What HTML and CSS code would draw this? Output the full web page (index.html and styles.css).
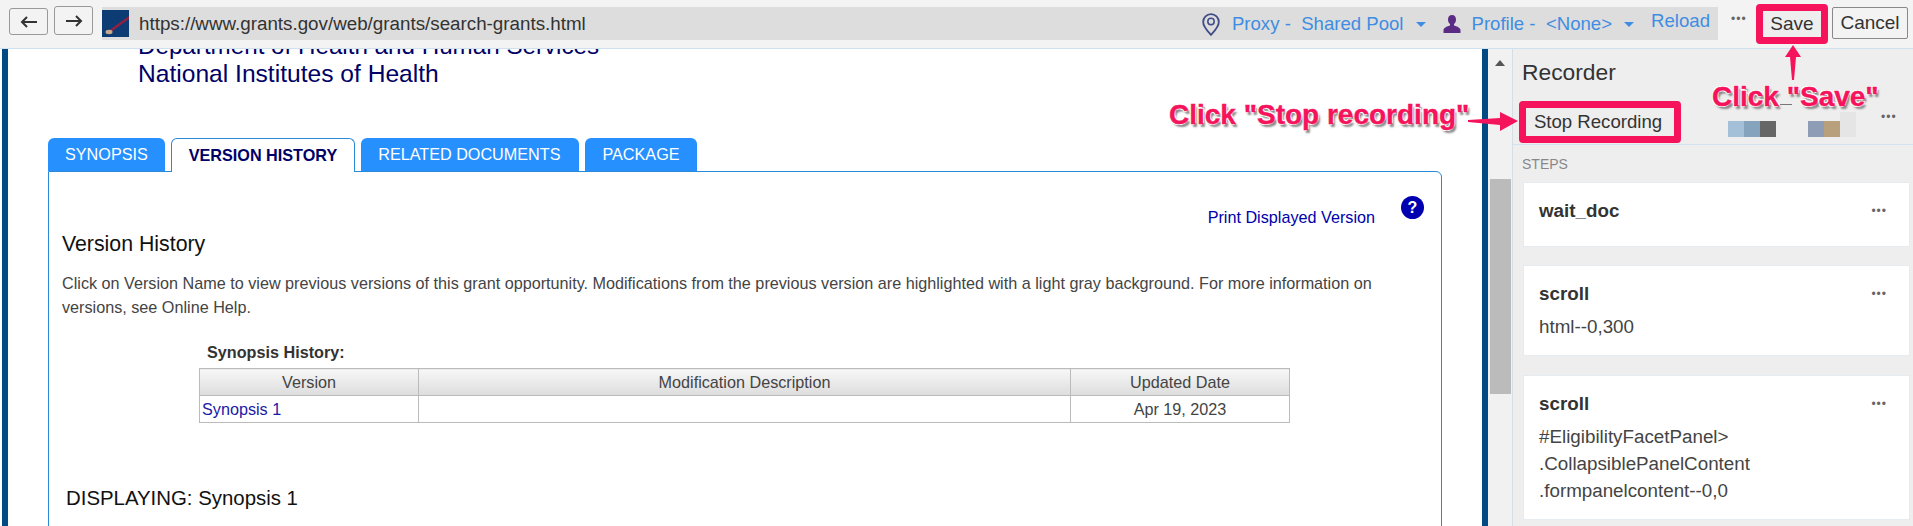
FILE: index.html
```html
<!DOCTYPE html>
<html lang="en">
<head>
    <meta charset="UTF-8">
    <title>Recorder</title>
    <link rel="stylesheet" href="styles.css">
</head>
<body>
    <div class="toolbar">
        <button class="nav-btn back">
            <svg width="18" height="14" viewBox="0 0 18 14"><path d="M17 7H2M7 2L2 7l5 5" fill="none" stroke="#333" stroke-width="2"/></svg>
        </button>
        <button class="nav-btn forward">
            <svg width="18" height="14" viewBox="0 0 18 14"><path d="M1 7h15M11 2l5 5-5 5" fill="none" stroke="#333" stroke-width="2"/></svg>
        </button>
        <div class="url-bar">
            <svg class="favicon" width="27" height="27" viewBox="0 0 27 27">
                <rect width="27" height="27" fill="#0d3b73"/>
                <path d="M6 21L27 6v3L9 22z" fill="#8f2142"/>
                <ellipse cx="7" cy="22" rx="3.5" ry="2.2" fill="#c9a98a"/>
            </svg>
            <span class="url-text">https://www.grants.gov/web/grants/search-grants.html</span>
            <svg class="pin-icon" width="18" height="23" viewBox="0 0 18 23">
                <path d="M9 1.2a7.8 7.8 0 0 0-7.8 7.8C1.200 14 6 18.500 9 21.800 12 18.500 16.800 14 16.800 9A7.800 7.800 0 0 0 9 1.200z" fill="none" stroke="#3f4c86" stroke-width="1.800"/>
                <circle cx="9" cy="8.500" r="3.200" fill="none" stroke="#3f4c86" stroke-width="1.500"/>
            </svg>
            <span class="bar-link proxy">Proxy -&nbsp; Shared Pool</span>
            <span class="caret"></span>
            <svg class="person-icon" width="18" height="18" viewBox="0 0 18 18">
                <path d="M9 0c2.600 0 4 2 4 4.500 0 2-.8 3.600-2 4.600v1.400c2.500.8 6 2 6.500 4.500V18H.5v-3c.5-2.500 4-3.700 6.500-4.500V9.100C5.800 8.100 5 6.500 5 4.500 5 2 6.400 0 9 0z" fill="#5b2c83"/>
            </svg>
            <span class="bar-link profile">Profile -&nbsp; &lt;None&gt;</span>
            <span class="caret"></span>
            <span class="bar-link reload">Reload</span>
        </div>
        <span class="dots top-dots">•••</span>
        <button class="top-btn save">Save</button>
        <button class="top-btn cancel">Cancel</button>
    </div>

    <div class="workspace">
        <div class="page">
            <div class="agency">
                <div class="agency-top">Department of Health and Human Services</div>
                <div>National Institutes of Health</div>
            </div>
            <div class="tabs">
                <div class="tab">SYNOPSIS</div>
                <div class="tab active">VERSION HISTORY</div>
                <div class="tab tab-wide">RELATED DOCUMENTS</div>
                <div class="tab">PACKAGE</div>
            </div>
            <div class="tab-panel">
                <div class="print-row">
                    <a class="print-link">Print Displayed Version</a>
                    <span class="help">?</span>
                </div>
                <h2 class="panel-title">Version History</h2>
                <p class="panel-text">Click on Version Name to view previous versions of this grant opportunity. Modifications from the previous version are highlighted with a light gray background. For more information on versions, see Online Help.</p>
                <div class="history-label">Synopsis History:</div>
                <table class="history">
                    <tr>
                        <th class="col-version">Version</th>
                        <th class="col-desc">Modification Description</th>
                        <th class="col-date">Updated Date</th>
                    </tr>
                    <tr>
                        <td><a>Synopsis 1</a></td>
                        <td></td>
                        <td class="date">Apr 19, 2023</td>
                    </tr>
                </table>
                <div class="displaying">DISPLAYING: Synopsis 1</div>
            </div>
        </div>

        <div class="scrollbar">
            <span class="scroll-up"></span>
            <div class="scroll-thumb"></div>
        </div>

        <div class="recorder">
            <div class="rec-head">
                <h1 class="rec-title">Recorder</h1>
                <div class="rec-actions">
                    <button class="stop-btn">Stop Recording</button>
                    <div class="swatches first">
                        <i class="c1"></i><i class="c2"></i><i class="c3"></i>
                    </div>
                    <div class="swatches second">
                        <i class="c4"></i><i class="c5"></i><i class="c6"></i>
                    </div>
                    <span class="dots rec-dots">•••</span>
                </div>
            </div>
            <div class="steps-label">STEPS</div>
            <div class="step step-short">
                <div class="step-top"><b>wait_doc</b><span class="dots">•••</span></div>
            </div>
            <div class="step">
                <div class="step-top"><b>scroll</b><span class="dots">•••</span></div>
                <div class="step-body">html--0,300</div>
            </div>
            <div class="step">
                <div class="step-top"><b>scroll</b><span class="dots">•••</span></div>
                <div class="step-body">#EligibilityFacetPanel&gt;<br>.CollapsiblePanelContent<br>.formpanelcontent--0,0</div>
            </div>
        </div>
    </div>

    <!-- annotations on top of the screenshot -->
    <div class="note-line"></div>
    <div class="note note-stop">Click "Stop recording"</div>
    <div class="note note-save">Click "Save"</div>
    <svg class="arrows" width="1913" height="526" viewBox="0 0 1913 526">
        <path d="M1468 120l32-2v-6l18 9-18 10v-6l-32-3z" fill="#f5135c"/>
        <path d="M1793 45l8 12h-5l-2 23h-2l-2-23h-5z" fill="#f5135c"/>
    </svg>
</body>
</html>
```

FILE: styles.css
```css
*{
    box-sizing: border-box;
    margin: 0;
    padding: 0;
}
body{
    position: relative;
    height: 526px;
    overflow: hidden;
    background-color: #fff;
    font-family: "Liberation Sans", Arial, sans-serif;
    color: #333;
}
button{
    font-family: inherit;
    color: #333;
}

/* top bar */
.toolbar{
    display: flex;
    align-items: flex-start;
    height: 49px;
    padding-left: 9px;
    background-color: #f3f3f3;
    border-bottom: 1px solid #cfe0ee;
}
.nav-btn{
    display: flex;
    align-items: center;
    justify-content: center;
    width: 39px;
    background-color: #f3f3f3;
    border: 1px solid #999;
    border-radius: 3px;
}
.back{
    height: 27px;
    margin-top: 8px;
}
.forward{
    height: 29px;
    margin: 6px 0 0 6px;
}
.url-bar{
    display: flex;
    align-items: center;
    flex: none;
    width: 1616px;
    height: 33px;
    margin: 7px 0 0 9px;
    background-color: #ddd;
    font-size: 18.8px;
}
.favicon{
    flex: none;
}
.url-text{
    margin-left: 10px;
    color: #333;
}
.pin-icon{
    margin-left: auto;
    margin-top: 2px;
}
.bar-link{
    color: #3f8de2;
    font-size: 18.6px;
}
.proxy{
    margin-left: 12px;
}
.caret{
    width: 0;
    height: 0;
    margin: 2px 0 0 12px;
    border-left: 5px solid transparent;
    border-right: 5px solid transparent;
    border-top: 5px solid #3f8de2;
}
.person-icon{
    margin-left: 17px;
}
.profile{
    margin-left: 11px;
}
.reload{
    margin: -5px 8px 0 17px;
}
.dots{
    color: #666;
    font-size: 12px;
    letter-spacing: 1px;
    line-height: 12px;
}
.top-dots{
    flex: none;
    width: 17px;
    margin: 13px 0 0 13px;
}
.top-btn{
    height: 32px;
    font-size: 19px;
    background-color: #eee;
}
.save{
    width: 72px;
    height: 40px;
    margin: 4px 0 0 8px;
    border: 7px solid #f5135c;
    border-radius: 4px;
}
.cancel{
    width: 76px;
    margin: 7px 0 0 4px;
    background-color: #f3f3f3;
    border: 1px solid #888;
    border-radius: 2px;
}

/* main row */
.workspace{
    display: flex;
    height: 477px;
}
.page{
    flex: none;
    width: 1486px;
    margin-left: 2px;
    padding-left: 40px;
    overflow: hidden;
    border-left: 6px solid #004a85;
    border-right: 6px solid #004a85;
}
.agency{
    margin-top: -17px;
    padding-left: 90px;
    color: #000066;
    font-size: 24.6px;
    line-height: 28px;
}
.agency-top{
    font-size: 24.2px;
}
.tabs{
    display: flex;
    gap: 6px;
    margin: 50px 0 -1px;
}
.tab{
    height: 33px;
    padding: 0 17px;
    background-color: #2690ff;
    border-radius: 6px 6px 0 0;
    color: #fff;
    font-size: 16.2px;
    line-height: 33px;
}
.tab-wide{
    padding-right: 19px;
}
.tab.active{
    position: relative;
    height: 34px;
    background-color: #fff;
    border: 1px solid #2b8ad8;
    border-bottom: 0;
    color: #000066;
    font-weight: bold;
}
.tab-panel{
    width: 1394px;
    height: 400px;
    padding: 0 0 0 13px;
    border: 1px solid #2b8ad8;
    border-radius: 0 6px 0 0;
}
.print-row{
    display: flex;
    align-items: flex-start;
    justify-content: flex-end;
    gap: 26px;
    margin-top: 24px;
    padding-right: 17px;
}
.print-link{
    margin-top: 12px;
    color: #0000aa;
    font-size: 16.2px;
    line-height: 18px;
}
.help{
    width: 23px;
    height: 23px;
    background-color: #0000b0;
    border-radius: 50%;
    color: #fff;
    font-size: 16px;
    font-weight: bold;
    line-height: 23px;
    text-align: center;
}
.panel-title{
    margin-top: 6px;
    color: #111;
    font-size: 21.300px;
    font-weight: normal;
    line-height: 24px;
}
.panel-text{
    width: 1320px;
    margin-top: 15px;
    color: #444;
    font-size: 16.2px;
    line-height: 24px;
}
.history-label{
    margin: 23px 0 0 145px;
    color: #333;
    font-size: 16.2px;
    font-weight: bold;
    line-height: 20px;
}
.history{
    width: 1091px;
    margin: 6px 0 0 137px;
    border-collapse: collapse;
    font-size: 16.2px;
    color: #444;
}
.history th,
.history td{
    height: 27px;
    border: 1px solid #bbb;
    text-align: center;
    font-weight: normal;
}
.history th{
    background: linear-gradient(#f7f7f7, #ddd);
}
.history td:first-child{
    padding-left: 2px;
    text-align: left;
}
.history a{
    color: #1a1aa6;
}
.col-version{
    width: 219px;
}
.col-date{
    width: 219px;
}
.displaying{
    margin: 63px 0 0 4px;
    color: #111;
    font-size: 20.4px;
    line-height: 24px;
}

/* scrollbar */
.scrollbar{
    display: flex;
    flex-direction: column;
    align-items: center;
    flex: none;
    width: 24px;
    background-color: #f1f1f1;
}
.scroll-up{
    margin-top: 11px;
    border-left: 5px solid transparent;
    border-right: 5px solid transparent;
    border-bottom: 6px solid #555;
}
.scroll-thumb{
    width: 21px;
    height: 215px;
    margin-top: 113px;
    background-color: #bbb;
}

/* recorder panel */
.recorder{
    flex: 1;
    background-color: #eee;
    border-left: 1px solid #d3dfe8;
}
.rec-head{
    height: 96px;
    padding-top: 10px;
    border-bottom: 1px solid #d3e2ee;
}
.rec-title{
    margin-left: 9px;
    color: #333;
    font-size: 22.8px;
    font-weight: normal;
    line-height: 26px;
}
.rec-actions{
    display: flex;
    align-items: flex-start;
    margin: 16px 0 0 6px;
}
.stop-btn{
    width: 162px;
    height: 42px;
    padding-right: 4px;
    background-color: #eee;
    border: 7px solid #f5135c;
    border-radius: 4px;
    font-size: 18.6px;
}
.swatches{
    display: flex;
    align-items: flex-end;
    height: 36px;
}
.swatches i{
    width: 16px;
    height: 16px;
}
.first{
    margin-left: 47px;
}
.second{
    margin-left: 32px;
}
.c1{ background-color: #a3c0d8; }
.c2{ background-color: #85a3bc; }
.c3{ background-color: #666; }
.c4{ background-color: #8f9cb5; }
.c5{ background-color: #b8a07c; }
.swatches .c6{
    height: 25px;
    background-color: #e5e5e5;
}
.rec-dots{
    margin: 10px 0 0 25px;
}
.steps-label{
    margin: 11px 0 10px 9px;
    color: #888;
    font-size: 14px;
    line-height: 16px;
}
.step{
    width: 387px;
    margin: 0 0 19px 10px;
    padding: 15px 22px 15px 15px;
    background-color: #fff;
    border: 1px solid #e6ebf0;
}
.step-short{
    height: 65px;
    margin-bottom: 18px;
}
.step-top{
    display: flex;
    align-items: center;
    justify-content: space-between;
    line-height: 26px;
    font-size: 18.8px;
}
.step-body{
    margin-top: 6px;
    color: #444;
    font-size: 18.8px;
    line-height: 27px;
}

/* red notes + arrows */
.note{
    position: absolute;
    color: #f5135c;
    font-size: 28px;
    font-weight: bold;
    line-height: 32px;
    white-space: nowrap;
    -webkit-text-stroke: 0.4px #f5135c;
    text-shadow: -1px -1px 0 #fff, 1px -1px 0 #fff, -1px 1px 0 #fff, 2px 3px 2px #888;
}
.note-stop{
    left: 1169px;
    top: 99px;
}
.note-save{
    left: 1712px;
    top: 81px;
}
.note-line{
    position: absolute;
    left: 1780px;
    top: 104px;
    width: 12px;
    height: 1px;
    background-color: #777;
}
.arrows{
    position: absolute;
    left: 0;
    top: 0;
}
```
